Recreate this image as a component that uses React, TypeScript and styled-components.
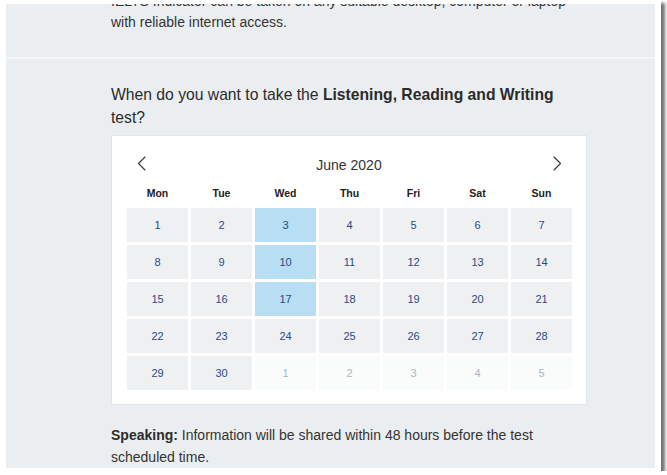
import React from "react";
import styled, { createGlobalStyle } from "styled-components";

const Global = createGlobalStyle`
  html, body { margin: 0; padding: 0; background: #ffffff; }
  body { font-family: "Liberation Sans", Arial, sans-serif; }
`;

const Frame = styled.div`
  width: 661px;
  height: 471px;
  box-sizing: border-box;
  padding: 4px 6px 3px 6px;
  background: #ffffff;
  box-shadow: 4px 3px 3px rgba(0, 0, 0, 0.55);
`;

const Panel = styled.div`
  height: 100%;
  background: #ebeef0;
  overflow: hidden;
  display: flex;
  flex-direction: column;
`;

const Section = styled.section<{ $top?: boolean }>`
  padding: ${(p) => (p.$top ? "0 0 24px 105px" : "24px 68px 0 105px")};
  border-bottom: ${(p) => (p.$top ? "2px solid #f4f6f7" : "none")};
`;

const Para = styled.p<{ $shift?: boolean }>`
  margin: ${(p) => (p.$shift ? "-13px 0 0 0" : "0")};
  font-size: 14px;
  line-height: 21px;
  color: #333333;
  width: 480px;
`;

const Question = styled.h2`
  margin: 0 0 6px 0;
  font-size: 15.7px;
  line-height: 23px;
  font-weight: normal;
  color: #2b2b2b;
  b { font-weight: bold; }
`;

const Card = styled.div`
  width: 476px;
  box-sizing: border-box;
  background: #ffffff;
  border: 1px solid #e2e5e7;
  padding: 13px 14px 14px 15px;
`;

const Header = styled.div`
  height: 28px;
  display: flex;
  align-items: center;
  justify-content: space-between;
  padding: 0 10px 0 9px;
`;

const Month = styled.div`
  font-size: 14px;
  color: #333333;
  padding-top: 3px;
`;

const NavButton = styled.button`
  border: none;
  background: none;
  padding: 0;
  width: 10px;
  height: 16px;
  display: flex;
  align-items: center;
  justify-content: center;
  cursor: pointer;
`;

const Weekdays = styled.div`
  margin-top: 6px;
  height: 20px;
  display: grid;
  grid-template-columns: repeat(7, 61px);
  column-gap: 3px;
  align-items: center;
`;

const Weekday = styled.div`
  text-align: center;
  font-size: 10.5px;
  font-weight: bold;
  color: #222222;
`;

const Grid = styled.div`
  margin-top: 5px;
  display: grid;
  grid-template-columns: repeat(7, 61px);
  grid-auto-rows: 34px;
  gap: 3px;
`;

type Kind = "normal" | "selected" | "other";

const Day = styled.div<{ $kind: Kind }>`
  display: flex;
  align-items: center;
  justify-content: center;
  font-size: 11px;
  background: ${(p) =>
    p.$kind === "selected" ? "#b8def3" : p.$kind === "other" ? "#fafbfb" : "#eff0f2"};
  color: ${(p) => (p.$kind === "other" ? "#a8b6c6" : "#1f4c86")};
`;

const Footer = styled.p`
  margin: 19px 0 0 0;
  font-size: 14px;
  line-height: 22px;
  color: #333333;
  b { font-weight: bold; color: #2b2b2b; }
`;

const Chevron = ({ dir }: { dir: "left" | "right" }) => (
  <svg width="9" height="15" viewBox="0 0 9 15" fill="none">
    <polyline
      points={dir === "left" ? "8,1 1.5,7.5 8,14" : "1,1 7.5,7.5 1,14"}
      stroke="#333333"
      strokeWidth="1.1"
      strokeLinecap="round"
      strokeLinejoin="round"
    />
  </svg>
);

const weekdays = ["Mon", "Tue", "Wed", "Thu", "Fri", "Sat", "Sun"];

const days: { n: number; kind: Kind }[] = [
  ...Array.from({ length: 30 }, (_, i) => ({
    n: i + 1,
    kind: ([3, 10, 17].includes(i + 1) ? "selected" : "normal") as Kind,
  })),
  ...[1, 2, 3, 4, 5].map((n) => ({ n, kind: "other" as Kind })),
];

export default function App() {
  return (
    <>
      <Global />
      <Frame>
        <Panel>
          <Section $top>
            <Para $shift>
              IELTS Indicator can be taken on any suitable desktop, computer or laptop
              with reliable internet access.
            </Para>
          </Section>
          <Section>
            <Question>
              When do you want to take the <b>Listening, Reading and Writing</b> test?
            </Question>
            <Card>
              <Header>
                <NavButton aria-label="Previous month">
                  <Chevron dir="left" />
                </NavButton>
                <Month>June 2020</Month>
                <NavButton aria-label="Next month">
                  <Chevron dir="right" />
                </NavButton>
              </Header>
              <Weekdays>
                {weekdays.map((w) => (
                  <Weekday key={w}>{w}</Weekday>
                ))}
              </Weekdays>
              <Grid>
                {days.map((d, i) => (
                  <Day key={i} $kind={d.kind}>
                    {d.n}
                  </Day>
                ))}
              </Grid>
            </Card>
            <Footer>
              <b>Speaking:</b> Information will be shared within 48 hours before the test
              scheduled time.
            </Footer>
          </Section>
        </Panel>
      </Frame>
    </>
  );
}
